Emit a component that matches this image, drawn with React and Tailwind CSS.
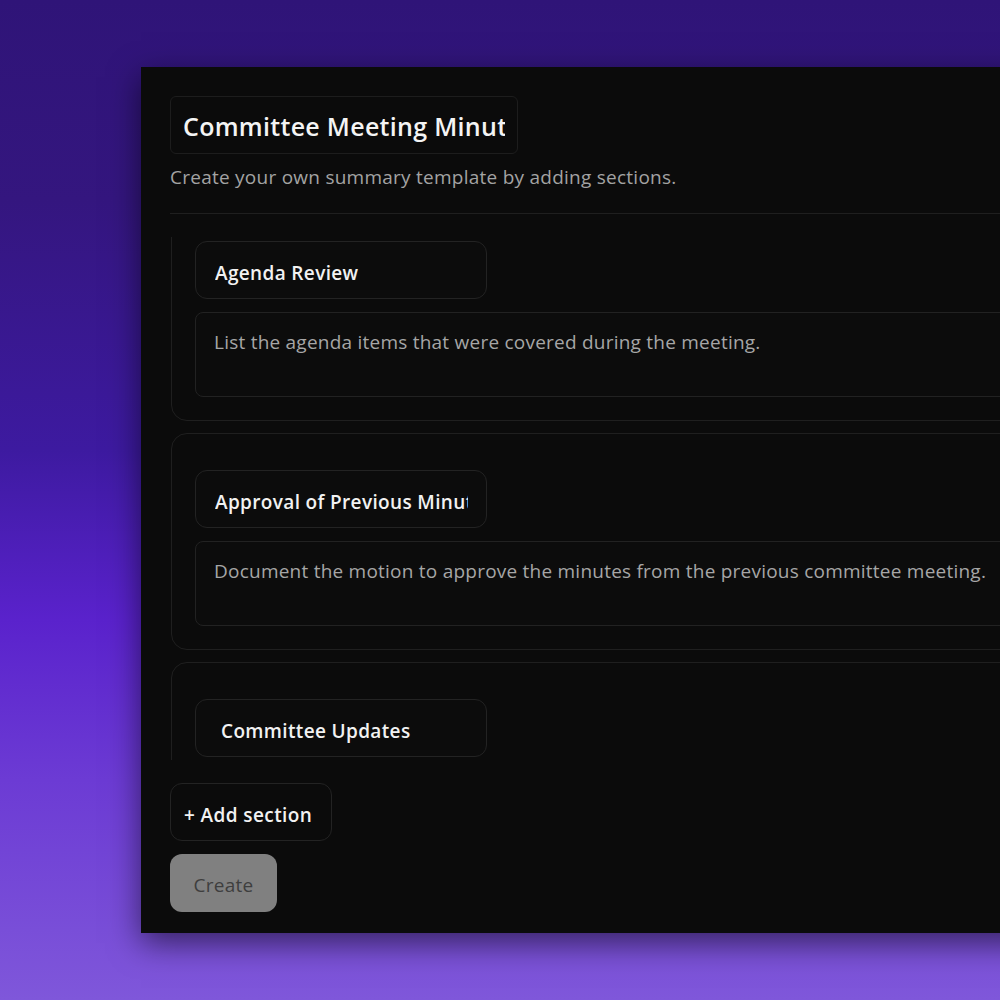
import React, { useCallback } from "react";

const font = { fontFamily: '"Open Sans", "Noto Sans", sans-serif' };

function NameInput({ value, indent = "pl-[19px]" }) {
  return (
    <input
      readOnly
      value={value}
      className={`h-[58px] w-[292px] shrink-0 rounded-[12px] border border-[#232323] bg-[#0c0c0c] ${indent} pr-[18px] pt-[6px] text-[19px] font-semibold tracking-[0.35px] text-[#f2f2f2] outline-none`}
    />
  );
}

function Section({ name, desc, indent }) {
  return (
    <div className="flex w-full flex-col gap-[13px] rounded-[16px] border border-[#1f1f1f] px-[23px] pb-[23px] pt-[36px]">
      <NameInput value={name} indent={indent} />
      {desc ? (
        <div className="h-[85px] w-full whitespace-nowrap rounded-[8px] border border-[#222222] bg-[#0c0c0c] px-[18px] pt-[16px] text-[19px] leading-[26px] tracking-[0.23px] text-[#a6a6a6]">
          {desc}
        </div>
      ) : (
        <div className="h-[85px] w-full rounded-[8px] border border-[#222222] bg-[#0c0c0c]" />
      )}
    </div>
  );
}

export default function App() {
  const scrollRef = useCallback((el) => {
    if (el) el.scrollTop = 33;
  }, []);
  return (
    <div
      style={font}
      className="h-[1000px] w-[1000px] overflow-hidden bg-[linear-gradient(180deg,#2f1478_0%,#34167f_20%,#3d1aa0_45%,#5a22cc_62%,#6c3bd4_78%,#7f57da_100%)] pl-[141px] pt-[67px]"
    >
      <div className="flex h-[866px] w-[1100px] flex-col bg-[#0b0b0b] pl-[29px] pt-[29px] shadow-[0_10px_30px_rgba(0,0,0,0.55)]">
        <input
          readOnly
          value="Committee Meeting Minutes"
          className="h-[58px] w-[348px] rounded-[6px] border border-[#1d1d1d] bg-[#0b0b0b] px-[12px] pt-[2px] text-[25px] font-semibold tracking-[0.3px] text-[#f4f4f4] outline-none"
        />
        <p className="mt-[10px] whitespace-nowrap text-[19px] leading-[26px] tracking-[0.25px] text-[#a3a3a3]">
          Create your own summary template by adding sections.
        </p>
        <div className="mt-[23px] h-px w-full bg-[#1f1f1f]" />
        <div ref={scrollRef} className="mt-[23px] h-[523px] overflow-hidden">
          <div className="flex flex-col gap-[12px] pl-[1px]">
            <Section
              name="Agenda Review"
              desc="List the agenda items that were covered during the meeting."
            />
            <Section
              name="Approval of Previous Minutes"
              desc="Document the motion to approve the minutes from the previous committee meeting."
            />
            <Section name="Committee Updates" indent="pl-[25px]" />
          </div>
        </div>
        <button className="mt-[23px] flex h-[58px] w-[162px] items-center whitespace-nowrap rounded-[12px] border border-[#232323] bg-[#0b0b0b] pl-[13px] pt-[6px] text-[19px] font-semibold tracking-[0.4px] text-[#f2f2f2]">
          + Add section
        </button>
        <button className="mt-[13px] flex h-[58px] w-[107px] items-center justify-center rounded-[12px] bg-[#808080] pt-[4px] text-[19px] tracking-[0.3px] text-[#3e3e3e]">
          Create
        </button>
      </div>
    </div>
  );
}
